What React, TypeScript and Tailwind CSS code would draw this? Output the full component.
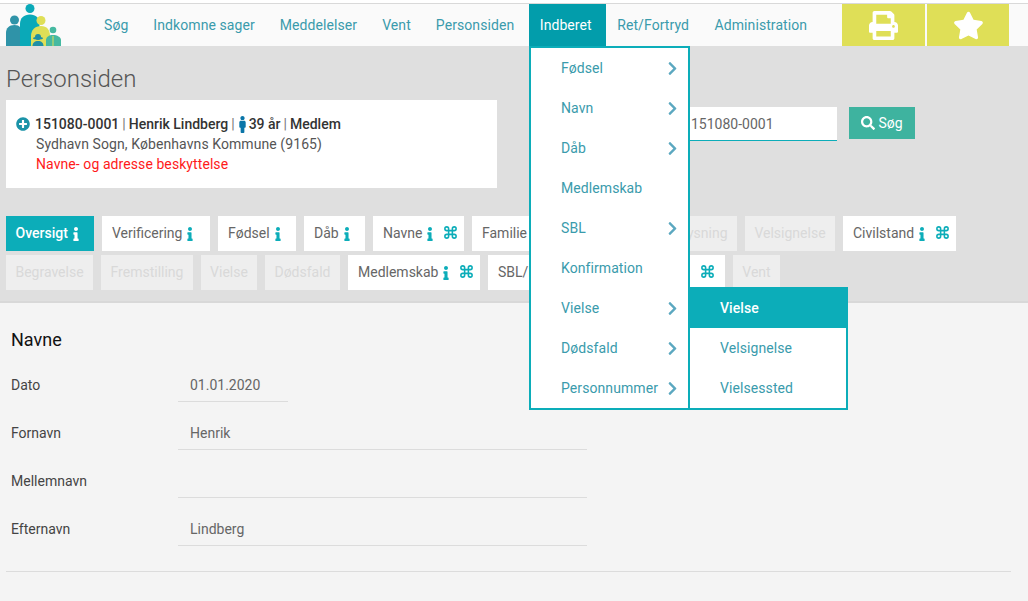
import React from "react";
import { FaChevronRight, FaInfo, FaMale, FaPlusCircle, FaPrint, FaSearch, FaStar } from "react-icons/fa";
import { Command } from "lucide-react";

const navItems = ["Søg", "Indkomne sager", "Meddelelser", "Vent", "Personsiden", "Indberet", "Ret/Fortryd", "Administration"];

type Tab = { t: string; i?: boolean; c?: boolean; off?: boolean; on?: boolean; w?: string };
const row1: Tab[] = [
  { t: "Oversigt", i: true, on: true, w: "w-[88px]" },
  { t: "Verificering", i: true, w: "w-[108px]" },
  { t: "Fødsel", i: true, w: "w-[78px]" },
  { t: "Dåb", i: true, w: "w-[61px]" },
  { t: "Navne", i: true, c: true, w: "w-[91px]" },
  { t: "Familie", i: true, c: true, w: "w-[112px]" },
  { t: "Personoplysning", off: true, w: "w-[145px] justify-end" },
  { t: "Velsignelse", off: true, w: "w-[90px] justify-center" },
  { t: "Civilstand", i: true, c: true, w: "w-[113px]" },
];
const row2: Tab[] = [
  { t: "Begravelse", off: true, w: "w-[87px] justify-center" },
  { t: "Fremstilling", off: true, w: "w-[92px] justify-center" },
  { t: "Vielse", off: true, w: "w-[56px] justify-center" },
  { t: "Dødsfald", off: true, w: "w-[75px] justify-center" },
  { t: "Medlemskab", i: true, c: true, w: "w-[132px]" },
  { t: "SBL/Konfirmation", i: true, c: true, w: "w-[237px]" },
  { t: "Vent", off: true, w: "w-[47px] justify-center" },
];

const menu: [string, boolean][] = [
  ["Fødsel", true],
  ["Navn", true],
  ["Dåb", true],
  ["Medlemskab", false],
  ["SBL", true],
  ["Konfirmation", false],
  ["Vielse", true],
  ["Dødsfald", true],
  ["Personnummer", true],
];

const fields: [string, string, string][] = [
  ["Dato", "01.01.2020", "w-[110px]"],
  ["Fornavn", "Henrik", "w-[409px]"],
  ["Mellemnavn", "", "w-[409px]"],
  ["Efternavn", "Lindberg", "w-[409px]"],
];

function Logo() {
  return (
    <svg width="62" height="42" viewBox="0 4 62 42" className="shrink-0">
      <circle cx="14.500" cy="20" r="4.500" fill="#2f93a8" />
      <path d="M6 46V33c0-5 3-8 8.500-8s7 3 7 8v13z" fill="#2f93a8" />
      <circle cx="30" cy="8.500" r="4.500" fill="#0aa9b8" />
      <path d="M20 46V24c0-6 4-9.500 10-9.500s9.500 3.500 9.500 9.500v22z" fill="#0aa9b8" />
      <circle cx="41" cy="20.500" r="4.500" fill="#dfdf57" />
      <path d="M31 46V36c0-6 4-10 10-10s9 4 9 10v10z" fill="#dfdf57" />
      <circle cx="38" cy="37" r="3" fill="#1f8fa6" />
      <ellipse cx="38" cy="38.200" rx="5" ry="1.200" fill="#1f8fa6" />
      <path d="M32.500 46c0-3 2-5 5.500-5s5.500 2 5.500 5z" fill="#1f8fa6" />
      <circle cx="53" cy="30" r="3.300" fill="#45b9a1" />
      <path d="M46 46V40c0-3 3-5 7-5s8 2 8 5v6z" fill="#45b9a1" />
      <path d="M53 36v10" stroke="#dfdf57" strokeWidth="1" />
    </svg>
  );
}

function TabPill({ tab }: { tab: Tab }) {
  const cls = tab.on
    ? "bg-[#0cadb9] text-white font-medium"
    : tab.off
      ? "bg-[#eeeeee] text-[#d9d9d9]"
      : "bg-white text-[#666666]";
  return (
    <div className={`flex h-[35px] items-center ${tab.off || tab.on ? "px-[9.5px]" : "px-[10px]"} text-[14px] ${cls} ${tab.w ?? ""}`}>
      <span className={tab.c ? "mr-auto whitespace-nowrap" : "whitespace-nowrap"}>{tab.t}</span>
      {tab.i && <FaInfo size={14} className={`ml-[1px] mr-[2px] shrink-0 ${tab.on ? "text-white" : "text-[#0cadb9]"}`} />}
      {tab.c && <Command size={15} strokeWidth={2.5} className="mb-[2px] ml-[4px] shrink-0 text-[#0cadb9]" />}
    </div>
  );
}

export default function App() {
  return (
    <div className="relative h-[601px] w-[1028px] overflow-hidden bg-[#f4f4f4] font-['Roboto',sans-serif] text-[14px]">
      <div className="h-[4px] border-b border-[#d9d9d9] bg-white" />
      <header className="flex h-[42px] items-stretch bg-[#fafafa]">
        <Logo />
        <nav className="ml-[31px] flex items-stretch tracking-[0.08px]">
          {navItems.map((n) => (
            <div
              key={n}
              className={`flex items-center ${n === "Indberet" ? "ml-[1px] bg-[#029dab] pl-[10.500px] pr-[14.500px] text-white" : n === "Administration" ? "ml-[0.500px] pl-[11px] pr-[14px] text-[#3a9bac]" : "pl-[11px] pr-[14px] text-[#3a9bac]"}`}
            >
              {n}
            </div>
          ))}
        </nav>
        <div className="ml-auto mr-[19px] flex gap-[2px]">
          <div className="flex w-[83px] items-center justify-center bg-[#dfdf57] text-white">
            <FaPrint size={29} />
          </div>
          <div className="flex w-[82px] items-center justify-center bg-[#dfdf57] text-white">
            <FaStar size={31} />
          </div>
        </div>
      </header>

      <section className="h-[257px] border-b-2 border-[#d8d8d8] bg-[#dfdfdf] px-[6px]">
        <h1 className="pt-[18px] text-[24px] font-light leading-[30px] text-[#555555]">Personsiden</h1>
        <div className="mt-[6px] flex items-start">
          <div className="h-[88px] w-[491px] bg-white px-[10px] py-[14px] leading-[20px]">
            <div className="flex items-center gap-[5px] font-medium text-[#333333]">
              <FaPlusCircle size={14} className="text-[#1b93a8]" />
              <span className="flex items-center">
                151080-0001<span className="mx-[3px] font-normal text-[#777777]">|</span>Henrik Lindberg
                <span className="mx-[3px] font-normal text-[#777777]">|</span>
                <FaMale size={17} className="-ml-[3.5px] -mr-[2.5px] text-[#0a75a8]" />
                <span>39 år</span>
                <span className="mx-[3px] font-normal text-[#777777]">|</span>Medlem
              </span>
            </div>
            <div className="pl-[20px] tracking-[0.08px] text-[#555555]">Sydhavn Sogn, Københavns Kommune (9165)</div>
            <div className="pl-[20px] tracking-[0.08px] text-[#ff1a1a]">Navne- og adresse beskyttelse</div>
          </div>
          <div className="ml-[40px] mt-[7px] flex h-[34px] w-[300px] items-center border-b border-[#0cadb9] bg-white pl-[154px] pt-[1px] text-[#666666]">
            151080-0001
          </div>
          <button className="ml-[12px] mt-[7px] flex h-[32px] w-[66px] items-center justify-center gap-[3px] bg-[#3eb39f] text-white">
            <FaSearch size={14} />
            Søg
          </button>
        </div>
        <div className="mt-[28px] flex flex-col gap-[4px]">
          <div className="flex gap-[8px]">
            {row1.map((t) => (
              <TabPill key={t.t} tab={t} />
            ))}
          </div>
          <div className="flex gap-[8px]">
            {row2.map((t) => (
              <TabPill key={t.t} tab={t} />
            ))}
          </div>
        </div>
      </section>

      <main className="px-[6px]">
        <div className="w-[1005px] border-b border-[#dcdcdc] pb-[17px]">
          <h2 className="pl-[5px] pt-[25px] text-[18px] leading-[24px] text-[#111111]">Navne</h2>
          <div className="mt-[10px] flex flex-col">
            {fields.map(([label, value, w]) => (
              <div key={label} className="flex h-[48px]">
                <div className="w-[172px] pl-[5px] pt-[13px] leading-[20px] text-[#444444]">{label}</div>
                <div className={`${w} h-[40px] border-b border-[#dcdcdc] pl-[12px] pt-[13px] leading-[20px] text-[#666666]`}>
                  {value}
                </div>
              </div>
            ))}
          </div>
        </div>
      </main>

      <div className="absolute left-[529px] top-[46px] w-[161px] border-2 border-[#0cadb9] bg-white tracking-[0.08px] text-[#3a9bac]">
        {menu.map(([m, arrow]) => (
          <div key={m} className="flex h-[40px] items-center justify-between pl-[30px] pr-[8px]">
            <span>{m}</span>
            {arrow && <FaChevronRight size={15} className="text-[#5ba8c0]" />}
          </div>
        ))}
      </div>

      <div className="absolute left-[688px] top-[287px] w-[160px] border-2 border-[#0cadb9] bg-white tracking-[0.08px] text-[#3a9bac]">
        <div className="flex h-[39px] items-center bg-[#0cadb9] pl-[30px] font-medium text-white">Vielse</div>
        <div className="flex h-[40px] items-center pl-[30px]">Velsignelse</div>
        <div className="flex h-[40px] items-center pl-[30px]">Vielsessted</div>
      </div>
    </div>
  );
}
